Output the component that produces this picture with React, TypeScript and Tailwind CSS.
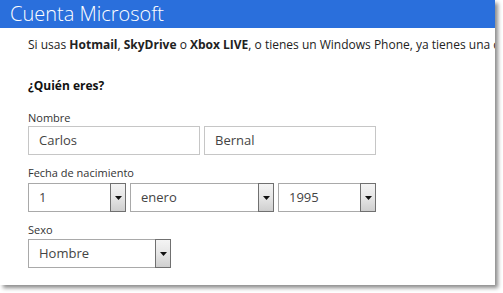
import React from 'react';

const font = { fontFamily: '"Open Sans", "Noto Sans", sans-serif' };

const Caret = () => (
    <svg width="7" height="4" viewBox="0 0 7 4" className="block">
        <path d="M0 0 H7 L3.5 4 Z" fill="#111" />
    </svg>
);

const Select = ({ value, width }: { value: string; width: string }) => (
    <div className={`flex h-[29px] ${width} border border-[#a9a9a9] bg-white`}>
        <div className="flex-1 flex items-center pl-[10px] text-[13px] text-[#444]">{value}</div>
        <div className="w-[16px] -my-px -mr-px flex items-center justify-center border border-[#707070] bg-gradient-to-b from-[#f4f4f4] via-[#e6e6e6] to-[#cfcfcf]">
            <Caret />
        </div>
    </div>
);

const Label = ({ children }: { children: React.ReactNode }) => (
    <p className="text-[11px] leading-[15px] text-[#333]">{children}</p>
);

export default function App() {
    return (
        <div className="w-[503px] h-[293px] bg-white overflow-hidden" style={font}>
            <div className="w-[495px] h-[285px] bg-white shadow-[3px_3px_4px_rgba(0,0,0,0.45)] overflow-hidden">
                <div className="h-[28px] bg-[#2a6fdc] pl-[10px] text-white text-[20px] leading-[28px] font-light">
                    Cuenta Microsoft
                </div>
                <div className="pl-[28px] pt-[8px] text-[#222]">
                    <p className="text-[12px] leading-[18px] whitespace-nowrap">
                        Si usas <b>Hotmail</b>, <b>SkyDrive</b> o <b>Xbox LIVE</b>, o tienes un Windows Phone, ya tienes una cuenta Microsoft.
                    </p>
                    <p className="mt-[23px] text-[12px] leading-[18px] font-bold text-[#111]">¿Quién eres?</p>
                    <div className="mt-[15px]">
                        <Label>Nombre</Label>
                        <div className="mt-[1px] flex gap-[4px]">
                            <div className="w-[172px] h-[29px] border border-[#c6c6c6] flex items-center pl-[10px] text-[13px] text-[#444]">Carlos</div>
                            <div className="w-[172px] h-[29px] border border-[#c6c6c6] flex items-center pl-[10px] text-[13px] text-[#444]">Bernal</div>
                        </div>
                    </div>
                    <div className="mt-[10px]">
                        <Label>Fecha de nacimiento</Label>
                        <div className="mt-[3px] flex gap-[4px]">
                            <Select value="1" width="w-[98px]" />
                            <Select value="enero" width="w-[144px]" />
                            <Select value="1995" width="w-[98px]" />
                        </div>
                    </div>
                    <div className="mt-[10px]">
                        <Label>Sexo</Label>
                        <div className="mt-[2px] flex">
                            <Select value="Hombre" width="w-[143px]" />
                        </div>
                    </div>
                </div>
            </div>
        </div>
    );
}
